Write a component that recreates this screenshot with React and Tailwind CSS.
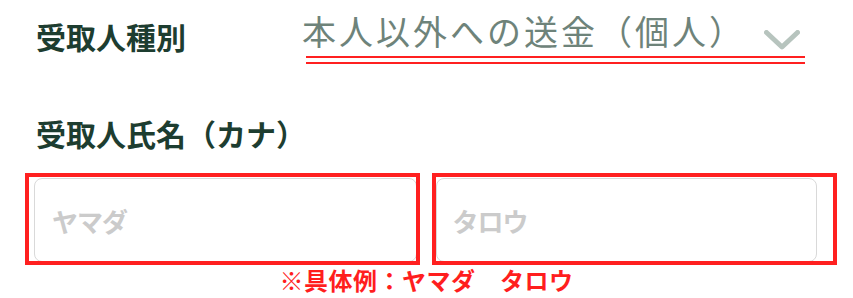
export default function App() {
  return (
    <div className="relative w-[853px] h-[298px] bg-white overflow-hidden font-['Noto_Sans_CJK_JP','Noto_Sans',sans-serif]">
      {/* Row 1 */}
      <div className="flex pl-[36px] pt-[14px]">
        <div className="w-[266px] pt-[7px] text-[30px] leading-[30px] font-bold text-[#1d3d30]">
          受取人種別
        </div>
        <div className="w-[503px]">
          <div className="flex items-start h-[34px]">
            <span className="text-[34px] leading-[34px] tracking-[3px] font-normal text-[#6e837a] whitespace-nowrap">
              本人以外への送金（個人）
            </span>
            <svg
              className="ml-auto mr-[5px] mt-[16px]"
              width="36"
              height="20"
              viewBox="0 0 36 20"
              fill="none"
            >
              <polyline
                points="2.5,2.5 18,17 33.5,2.5"
                stroke="#b7c4be"
                strokeWidth="5"
                strokeLinecap="round"
                strokeLinejoin="round"
              />
            </svg>
          </div>
          <div className="mt-[8px] ml-[4px] h-[8px] border-y-2 border-[#ff2020]" />
        </div>
      </div>

      {/* Row 2 */}
      <div className="mt-[54px] pl-[36px] text-[30px] leading-[30px] font-bold text-[#1d3d30]">
        受取人氏名（カナ）
      </div>

      {/* Row 3 */}
      <div className="mt-[30px] flex gap-[19px] pl-[34px] pr-[36px]">
        <div className="flex-1 h-[84px] border border-[#d9d9d9] rounded-[8px] flex items-center pl-[17px] text-[26px] tracking-[-1px] font-bold text-[#cbcbcb]">
          ヤマダ
        </div>
        <div className="flex-1 h-[84px] border border-[#d9d9d9] rounded-[8px] flex items-center pl-[16px] text-[26px] tracking-[-1px] font-bold text-[#cbcbcb]">
          タロウ
        </div>
      </div>

      {/* Note */}
      <div className="mt-[6px] text-center text-[24px] leading-[24px] font-bold tracking-[0.5px] text-[#ff1e1e]">
        ※具体例：ヤマダ　タロウ
      </div>

      {/* Annotation boxes */}
      <div className="absolute left-[25px] top-[173px] w-[395px] h-[92px] border-4 border-[#ff2020]" />
      <div className="absolute left-[432px] top-[173px] w-[405px] h-[92px] border-4 border-[#ff2020]" />
    </div>
  );
}
